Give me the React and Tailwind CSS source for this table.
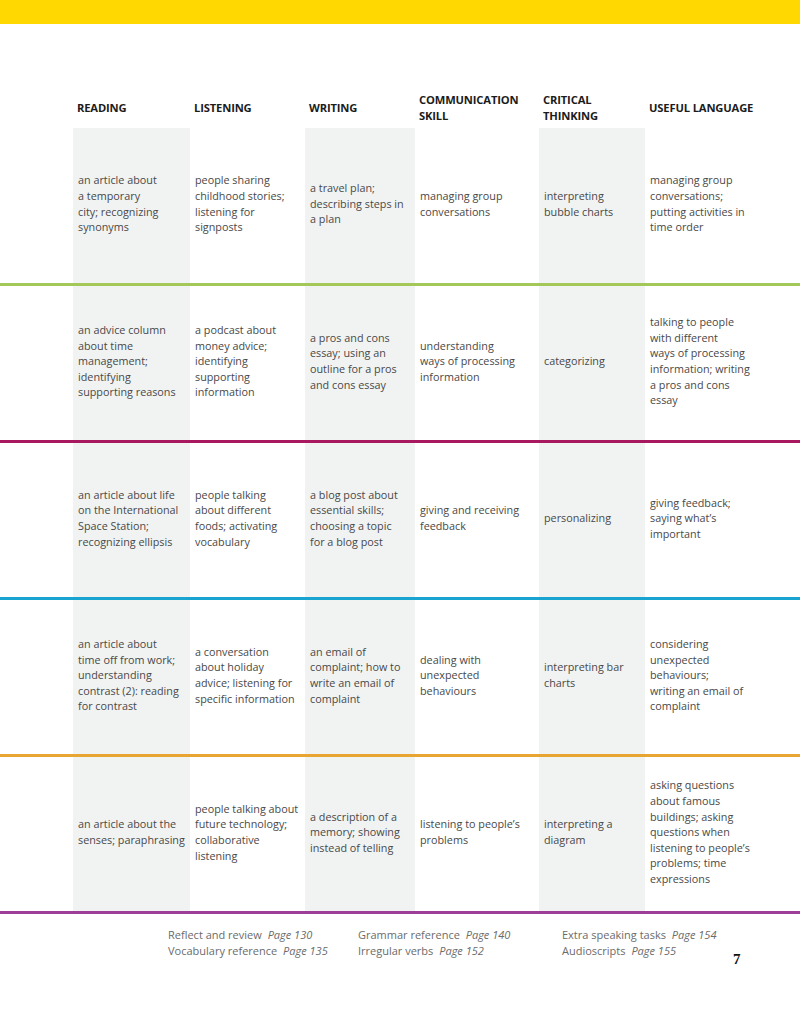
import React from "react";

const heads = [
    ["READING"],
    ["LISTENING"],
    ["WRITING"],
    ["COMMUNICATION", "SKILL"],
    ["CRITICAL", "THINKING"],
    ["USEFUL LANGUAGE"],
];

const rows = [
    {
        line: "bg-[#a3c859]",
        h: "h-[155px]",
        cells: [
            ["an article about", "a temporary", "city; recognizing", "synonyms"],
            ["people sharing", "childhood stories;", "listening for", "signposts"],
            ["a travel plan;", "describing steps in", "a plan"],
            ["managing group", "conversations"],
            ["interpreting", "bubble charts"],
            ["managing group", "conversations;", "putting activities in", "time order"],
        ],
    },
    {
        line: "bg-[#a8185e]",
        h: "h-[154px]",
        cells: [
            ["an advice column", "about time", "management;", "identifying", "supporting reasons"],
            ["a podcast about", "money advice;", "identifying", "supporting", "information"],
            ["a pros and cons", "essay; using an", "outline for a pros", "and cons essay"],
            ["understanding", "ways of processing", "information"],
            ["categorizing"],
            ["talking to people", "with different", "ways of processing", "information; writing", "a pros and cons", "essay"],
        ],
    },
    {
        line: "bg-[#18a3d0]",
        h: "h-[154px]",
        cells: [
            ["an article about life", "on the International", "Space Station;", "recognizing ellipsis"],
            ["people talking", "about different", "foods; activating", "vocabulary"],
            ["a blog post about", "essential skills;", "choosing a topic", "for a blog post"],
            ["giving and receiving", "feedback"],
            ["personalizing"],
            ["giving feedback;", "saying what’s", "important"],
        ],
    },
    {
        line: "bg-[#e8a531]",
        h: "h-[154px]",
        cells: [
            ["an article about", "time off from work;", "understanding", "contrast (2): reading", "for contrast"],
            ["a conversation", "about holiday", "advice; listening for", "specific information"],
            ["an email of", "complaint; how to", "write an email of", "complaint"],
            ["dealing with", "unexpected", "behaviours"],
            ["interpreting bar", "charts"],
            ["considering", "unexpected", "behaviours;", "writing an email of", "complaint"],
        ],
    },
    {
        line: "bg-[#9d3f98]",
        h: "h-[154px]",
        cells: [
            ["an article about the", "senses; paraphrasing"],
            ["people talking about", "future technology;", "collaborative", "listening"],
            ["a description of a", "memory; showing", "instead of telling"],
            ["listening to people’s", "problems"],
            ["interpreting a", "diagram"],
            ["asking questions", "about famous", "buildings; asking", "questions when", "listening to people’s", "problems; time", "expressions"],
        ],
    },
];

const cols = "grid grid-cols-[73px_117px_115px_110px_124px_106px_1fr]";
const shaded = [true, false, true, false, true, false];

export default function App() {
    return (
        <div className="w-[800px] h-[1024px] bg-white font-['Open_Sans',sans-serif] overflow-hidden">
            <div className="h-[24px] bg-[#fed800]" />

            {/* column headers */}
            <div className={`${cols} mt-[64px] h-[40px]`}>
                <div />
                {heads.map((h, i) => (
                    <div key={i} className="flex flex-col justify-center pl-[4px] text-[11.2px] leading-[16px] font-bold text-[#1c1c1c] tracking-[-0.15px]">
                        {h.map((t) => <span key={t}>{t}</span>)}
                    </div>
                ))}
            </div>

            {rows.map((row, r) => (
                <div key={r}>
                    <div className={`${cols} ${row.h}`}>
                        <div />
                        {row.cells.map((cell, c) => (
                            <div
                                key={c}
                                className={`flex flex-col justify-center pl-[5px] pb-[4px] text-[10.8px] leading-[15.6px] text-[#484848] ${shaded[c] ? "bg-[#f1f3f3]" : ""}`}
                            >
                                {cell.map((t, k) => <span key={k} className="whitespace-nowrap">{t}</span>)}
                            </div>
                        ))}
                    </div>
                    <div className={`h-[3px] ${row.line}`} />
                </div>
            ))}

            {/* footer references */}
            <div className="flex pt-[13px] text-[11px] leading-[16px] text-[#6b6b6b]">
                <div className="w-[168px]" />
                <div className="w-[190px]">
                    <div>Reflect and review <i className="ml-[3px]">Page 130</i></div>
                    <div>Vocabulary reference <i className="ml-[3px]">Page 135</i></div>
                </div>
                <div className="w-[204px]">
                    <div>Grammar reference <i className="ml-[3px]">Page 140</i></div>
                    <div>Irregular verbs <i className="ml-[3px]">Page 152</i></div>
                </div>
                <div className="w-[171px]">
                    <div>Extra speaking tasks <i className="ml-[3px]">Page 154</i></div>
                    <div>Audioscripts <i className="ml-[3px]">Page 155</i></div>
                </div>
                <div className="pt-[24px] font-['Liberation_Serif',serif] font-bold text-[15px] leading-[16px] text-[#111]">7</div>
            </div>
        </div>
    );
}
